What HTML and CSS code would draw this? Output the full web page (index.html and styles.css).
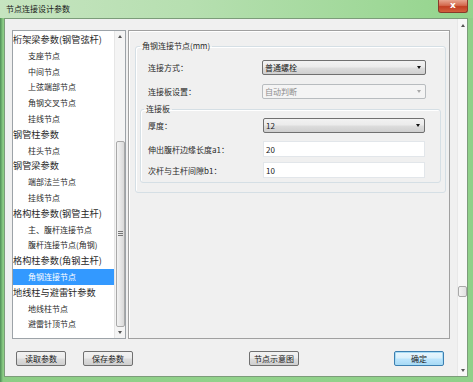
FILE: index.html
```html
<!DOCTYPE html>
<html lang="zh-CN">
<head>
    <meta charset="utf-8">
    <title>节点连接设计参数</title>
    <link rel="stylesheet" href="styles.css">
</head>
<body>
    <div class="window">
        <div class="titlebar">
            <span class="title">节点连接设计参数</span>
            <div class="close">x</div>
        </div>

        <div class="client">
            <div class="main">
                <div class="panes">
                    <div class="tree">
                        <ul class="items">
                            <li class="head">桁架梁参数(钢管弦杆)</li>
                            <li>支座节点</li>
                            <li>中间节点</li>
                            <li>上弦端部节点</li>
                            <li>角钢交叉节点</li>
                            <li>挂线节点</li>
                            <li class="head">钢管柱参数</li>
                            <li>柱头节点</li>
                            <li class="head">钢管梁参数</li>
                            <li>端部法兰节点</li>
                            <li>挂线节点</li>
                            <li class="head">格构柱参数(钢管主杆)</li>
                            <li>主、腹杆连接节点</li>
                            <li>腹杆连接节点(角钢)</li>
                            <li class="head">格构柱参数(角钢主杆)</li>
                            <li class="selected">角钢连接节点</li>
                            <li class="head">地线柱与避雷针参数</li>
                            <li>地线柱节点</li>
                            <li>避雷针顶节点</li>
                        </ul>
                        <div class="scrollbar">
                            <div class="arrow-box"><i class="arrow up"></i></div>
                            <div class="track">
                                <div class="thumb"><span class="grip"></span></div>
                            </div>
                            <div class="arrow-box"><i class="arrow down"></i></div>
                        </div>
                    </div>

                    <div class="panel">
                        <fieldset class="group outer">
                            <legend>角钢连接节点(mm)</legend>
                            <div class="row">
                                <label>连接方式：</label>
                                <div class="combo"><span>普通螺栓</span><i class="caret"></i></div>
                            </div>
                            <div class="row">
                                <label>连接板设置：</label>
                                <div class="combo disabled"><span>自动判断</span><i class="caret"></i></div>
                            </div>

                            <fieldset class="group inner">
                                <legend>连接板</legend>
                                <div class="row first">
                                    <label>厚度：</label>
                                    <div class="combo"><span>12</span><i class="caret"></i></div>
                                </div>
                                <div class="row">
                                    <label>伸出腹杆边缘长度a1：</label>
                                    <input type="text" class="field" value="20">
                                </div>
                                <div class="row">
                                    <label>次杆与主杆间隙b1：</label>
                                    <input type="text" class="field" value="10">
                                </div>
                            </fieldset>
                        </fieldset>
                    </div>
                </div>

                <div class="buttons">
                    <button class="btn read">读取参数</button>
                    <button class="btn save">保存参数</button>
                    <button class="btn diagram">节点示意图</button>
                    <button class="btn ok">确定</button>
                </div>
            </div>

            <div class="vscroll">
                <div class="arrow-box"><i class="arrow up"></i></div>
                <div class="vtrack"><div class="vthumb"></div></div>
                <div class="arrow-box"><i class="arrow down"></i></div>
            </div>
        </div>
    </div>
</body>
</html>
```

FILE: styles.css
```css
* {
    box-sizing: border-box;
}

body {
    margin: 0;
    width: 473px;
    height: 382px;
    overflow: hidden;
    font-family: "Noto Sans CJK SC", "Noto Sans", sans-serif;
    color: #222;
    background: #ffffff;
}

.window {
    display: flex;
    flex-direction: column;
    width: 473px;
    height: 382px;
    background: linear-gradient(to right, #4f8d57 0px, #8ccd85 3px, #92d28b 50%, #8fd089 100%);
}

.titlebar {
    display: flex;
    align-items: flex-start;
    height: 18px;
    padding-left: 6px;
    background: linear-gradient(to right, #c6e4c0 0%, #b6dfb0 40%, #9fd898 80%, #93d48c 100%);
}

.title {
    font-size: 8px;
    line-height: 18px;
    color: #1a1a1a;
}

.close {
    margin-left: auto;
    margin-right: 5px;
    width: 30px;
    height: 13px;
    border: 1px solid #8a3a2a;
    border-top: none;
    border-radius: 0 0 3px 3px;
    background: linear-gradient(to bottom, #e7a58f 0%, #d46a4f 45%, #c23f22 55%, #d2603f 100%);
    color: #fff;
    font-family: "DejaVu Sans", sans-serif;
    font-weight: bold;
    font-size: 9px;
    line-height: 11px;
    text-align: center;
}

.client {
    display: flex;
    flex: 1;
    margin: 0 5px 5px 4px;
    border: 1px solid #7c9c7a;
    background: #f0f0f0;
}

.main {
    flex: 1;
    padding: 11px 0 0 7px;
}

.panes {
    display: flex;
    gap: 2px;
    height: 309px;
}

/* left tree list */
.tree {
    display: flex;
    width: 114px;
    border: 1px solid #9da3a8;
    background: #fff;
}

.items {
    flex: 1;
    margin: 0;
    padding: 1px 0 0 0;
    list-style: none;
    overflow: hidden;
}

.items li {
    height: 15.8px;
    padding-left: 15px;
    font-size: 8px;
    line-height: 15.8px;
    white-space: nowrap;
    color: #2a2a2a;
}

.items li.head {
    padding-left: 0;
    font-size: 9.2px;
}

.items li.selected {
    background: #3399ff;
    color: #fff;
}

.scrollbar {
    display: flex;
    flex-direction: column;
    width: 11px;
    border-left: 1px solid #e6e6e6;
    background: #f4f4f4;
}

.arrow-box {
    display: flex;
    align-items: center;
    justify-content: center;
    height: 12px;
}

.arrow {
    width: 0;
    height: 0;
    border-left: 2.5px solid transparent;
    border-right: 2.5px solid transparent;
}

.arrow.up {
    border-bottom: 3px solid #555;
}

.arrow.down {
    border-top: 3px solid #555;
}

.track {
    flex: 1;
    padding-top: 98px;
}

.thumb {
    display: flex;
    align-items: center;
    justify-content: center;
    height: 186px;
    margin: 0 0 0 1px;
    border: 1px solid #a9a9a9;
    border-radius: 2px;
    background: linear-gradient(to right, #f3f3f3, #e4e4e4 60%, #d9d9d9);
}

.grip {
    width: 5px;
    height: 5px;
    border-top: 1px solid #777;
    border-bottom: 1px solid #777;
    background: linear-gradient(#777, #777) center / 5px 1px no-repeat;
}

/* right parameter panel */
.panel {
    width: 322px;
    padding: 9px 3px 0 6px;
    border: 1px solid #a0a0a0;
    box-shadow: inset 1px 1px 0 #ffffff;
}

.group {
    margin: 0;
    min-width: 0;
    border: 1px solid #d5dfe5;
    border-radius: 3px;
    box-shadow: inset 1px 1px 0 #ffffff;
}

.group legend {
    padding: 0 2px;
    font-size: 8px;
    line-height: 12px;
    color: #2a2a2a;
}

.outer {
    padding: 0 4px 9px 4px;
}

.outer legend {
    margin-left: 0;
}

.outer > .row {
    grid-template-columns: 114px 164px;
    padding-left: 8px;
}

.outer > .row:first-of-type {
    margin-top: 8px;
}

.outer > .row + .row {
    margin-top: 9px;
}

.inner {
    margin-top: 4px;
    padding: 0 0 4px 0;
}

.inner legend {
    margin-left: 3px;
}

.row {
    display: grid;
    align-items: center;
}

.inner .row {
    grid-template-columns: 115px 162px;
    padding-left: 7px;
    height: 16px;
}

.inner .row.first {
    margin-top: 3px;
    height: 15px;
    margin-bottom: 8px;
}

.inner .row + .row {
    margin-top: 5px;
}

.row label {
    font-size: 8px;
    color: #2a2a2a;
    white-space: nowrap;
}

.combo {
    display: flex;
    align-items: center;
    height: 15px;
    padding: 0 4px 0 2px;
    border: 1px solid #707070;
    border-radius: 2px;
    background: linear-gradient(to bottom, #f2f2f2 0%, #ebebeb 48%, #dddddd 52%, #cfcfcf 100%);
    font-size: 8px;
    color: #1a1a1a;
}

.combo span {
    flex: 1;
}

.caret {
    width: 0;
    height: 0;
    border-left: 2.5px solid transparent;
    border-right: 2.5px solid transparent;
    border-top: 3px solid #111;
}

.combo.disabled {
    border-color: #b8bcbf;
    background: #f4f4f4;
    color: #8d8d8d;
}

.combo.disabled .caret {
    border-top-color: #a8a8a8;
}

.field {
    height: 16px;
    margin: 0;
    padding: 0 2px;
    border: 1px solid #e2e6ea;
    background: #fff;
    font-family: "Noto Sans CJK SC", "Noto Sans", sans-serif;
    font-size: 8px;
    color: #1a1a1a;
    outline: none;
}

/* bottom buttons */
.buttons {
    display: flex;
    margin-top: 12px;
}

.btn {
    width: 50px;
    height: 15px;
    padding: 0;
    border: 1px solid #707070;
    border-radius: 2px;
    background: linear-gradient(to bottom, #f2f2f2 0%, #ebebeb 48%, #dddddd 52%, #cfcfcf 100%);
    font-family: "Noto Sans CJK SC", "Noto Sans", sans-serif;
    font-size: 8px;
    line-height: 13px;
    color: #1a1a1a;
}

.btn.read {
    margin-left: 4px;
}

.btn.save {
    margin-left: 17px;
}

.btn.diagram {
    margin-left: 116px;
}

.btn.ok {
    margin-left: 95px;
    border-color: #3c7fb1;
    box-shadow: inset 0 0 0 1px #a8dcf5;
    background: linear-gradient(to bottom, #eaf6fd 0%, #d9f0fc 48%, #bee6fd 52%, #a7d9f5 100%);
}

/* window scrollbar on the right */
.vscroll {
    display: flex;
    flex-direction: column;
    width: 10px;
    border-left: 1px solid #e8e8e8;
    background: #f7f7f7;
}

.vscroll .arrow-box {
    height: 12px;
}

.vtrack {
    flex: 1;
    padding-top: 255px;
}

.vthumb {
    height: 11px;
    border: 1px solid #a9a9a9;
    border-radius: 2px;
    background: linear-gradient(to right, #f3f3f3, #e2e2e2);
}
```
